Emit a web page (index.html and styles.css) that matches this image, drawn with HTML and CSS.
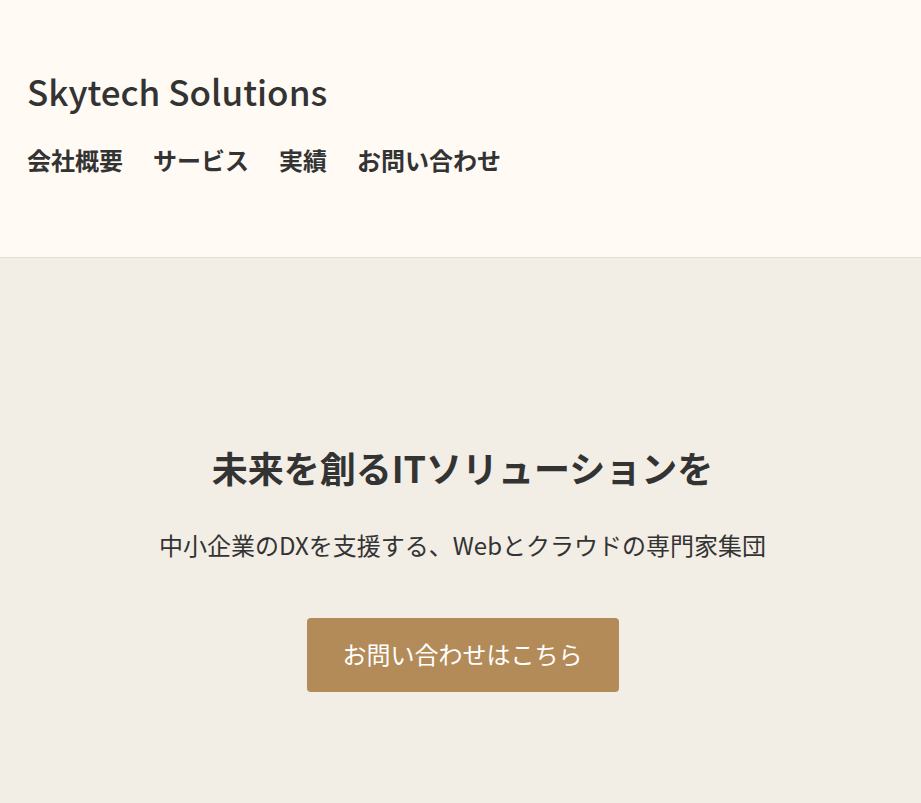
FILE: index.html
```html
<!DOCTYPE html>
<html lang="ja">
<head>
<meta charset="utf-8">
<title>Skytech Solutions</title>
<link rel="stylesheet" href="styles.css">
</head>
<body>
<header class="site-header">
  <div class="logo">Skytech Solutions</div>
  <nav class="nav">
    <a href="#">会社概要</a>
    <a href="#">サービス</a>
    <a href="#">実績</a>
    <a href="#">お問い合わせ</a>
  </nav>
</header>
<section class="hero">
  <h1 class="hero-title">未来を創るITソリューションを</h1>
  <p class="hero-sub">中小企業のDXを支援する、Webとクラウドの専門家集団</p>
  <a class="btn" href="#">お問い合わせはこちら</a>
</section>
</body>
</html>
```
FILE: styles.css
```css
html, body {
  margin: 0;
  padding: 0;
}
body {
  font-family: "Noto Sans CJK JP", "Noto Sans", sans-serif;
  color: #333;
  line-height: 1.7;
  background: #f2ede5;
}
.site-header {
  background: #fffaf3;
  border-bottom: 1px solid #e2ddd6;
  padding: 60px 27px 76px;
  display: flex;
  flex-direction: column;
  gap: 19px;
}
.logo {
  font-size: 35px;
  font-weight: 500;
  color: #333;
  line-height: 61px;
}
.nav {
  display: flex;
  gap: 30px;
}
.nav a {
  font-size: 24px;
  font-weight: 700;
  color: #333;
  text-decoration: none;
}
.hero {
  background: #f2ede5;
  min-height: 545px;
  padding: 179px 0 0 4px;
  box-sizing: border-box;
  display: flex;
  flex-direction: column;
  align-items: center;
  text-align: center;
}
.hero-title {
  margin: 0;
  font-size: 36px;
  font-weight: 700;
  color: #333;
}
.hero-sub {
  margin: 27px 0 0;
  font-size: 24px;
  font-weight: 400;
  color: #333;
}
.btn {
  margin-top: 52px;
  background: #b38b59;
  color: #fff;
  font-size: 24px;
  padding: 16px 36px 17px;
  border-radius: 4px;
  text-decoration: none;
}
```
